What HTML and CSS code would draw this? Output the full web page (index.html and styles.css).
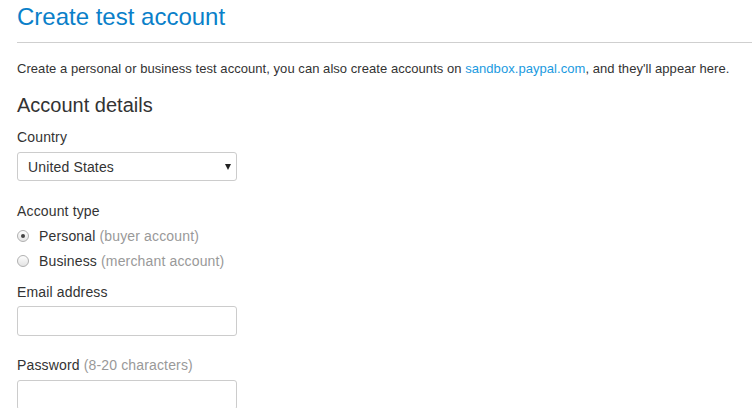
FILE: index.html
```html
<!DOCTYPE html>
<html>
<head>
<meta charset="utf-8">
<link rel="stylesheet" href="styles.css">
</head>
<body>
<div class="page">
  <h1 class="title">Create test account</h1>
  <hr class="rule">
  <p class="intro">Create a personal or business test account, you can also create accounts on <a class="link" href="#">sandbox.paypal.com</a>, and they'll appear here.</p>
  <h2 class="section">Account details</h2>
  <div class="group group-country">
    <label class="label">Country</label>
    <div class="select">
      <span>United States</span>
      <span class="caret"></span>
    </div>
  </div>
  <div class="group group-type">
    <label class="label">Account type</label>
    <div class="radio"><span class="dot checked"></span><span>Personal <span class="muted">(buyer account)</span></span></div>
    <div class="radio"><span class="dot"></span><span>Business <span class="muted">(merchant account)</span></span></div>
  </div>
  <div class="group group-email">
    <label class="label">Email address</label>
    <div class="input"></div>
  </div>
  <div class="group">
    <label class="label">Password <span class="muted">(8-20 characters)</span></label>
    <div class="input"></div>
  </div>
</div>
</body>
</html>
```
FILE: styles.css
```css
html, body { margin: 0; padding: 0; background: #fff; }
body { font-family: "Liberation Sans", Arial, sans-serif; color: #333; overflow: hidden; height: 408px; }
.page { padding: 0 0 0 17px; }
.title { margin: 0; padding-top: 2px; font-size: 24px; font-weight: normal; color: #0a7fc9; line-height: 30px; }
.rule { margin: 10px 0 0 0; border: 0; border-top: 1px solid #cfcfcf; height: 0; }
.intro { margin: 18px 0 0 0; font-size: 13px; line-height: 16px; color: #333; letter-spacing: 0.05px; }
.link { color: #1a9ae0; text-decoration: none; }
.section { margin: 16px 0 0 0; font-size: 20px; font-weight: normal; line-height: 24px; color: #333; }
.group { display: flex; flex-direction: column; }
.label { font-size: 14px; line-height: 18px; margin-top: 8px; margin-bottom: 6px; color: #333; letter-spacing: 0.15px; }
.group-country .label { margin-top: 11px; }
.select { width: 220px; height: 29px; box-sizing: border-box; border: 1px solid #ccc; border-radius: 3px; display: flex; align-items: center; justify-content: space-between; padding: 0 5px 0 10px; font-size: 14px; color: #333; letter-spacing: 0.15px; }
.caret { width: 0; height: 0; border-left: 3px solid transparent; border-right: 3px solid transparent; border-top: 6px solid #222; margin-top: 1px; }
.group-type { margin-top: 13px; }
.group-type .label { margin-bottom: 3px; }
.radio { display: flex; align-items: center; gap: 10px; font-size: 14px; height: 25px; color: #333; letter-spacing: 0.15px; }
.dot { width: 12px; height: 12px; border-radius: 50%; border: 1px solid #b0b0b0; background: linear-gradient(#fdfdfd, #e4e4e4); box-sizing: border-box; position: relative; }
.dot.checked::after { content: ""; position: absolute; left: 3px; top: 3px; width: 4px; height: 4px; border-radius: 50%; background: #444; }
.group-email .label { margin-top: 10px; margin-bottom: 5px; }
.muted { color: #999; }
.input { width: 220px; height: 30px; box-sizing: border-box; border: 1px solid #ccc; border-radius: 3px; margin-bottom: 12px; }
```
